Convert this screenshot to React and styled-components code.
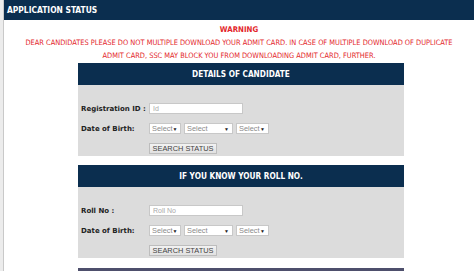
import React from 'react'
import styled, { createGlobalStyle } from 'styled-components'

const GlobalStyle = createGlobalStyle`
  html, body {
    margin: 0;
    padding: 0;
    background: #fff;
    font-family: "DejaVu Sans Condensed", "DejaVu Sans", Verdana, sans-serif;
  }
`

const colors = {
  navy: '#0b2e4f',
  slate: '#4e4f6c',
  panel: '#dcdcdc',
  red: '#e3262a',
  label: '#222',
}

const Page = styled.div`
  display: flex;
  width: 474px;
  height: 271px;
  overflow: hidden;
`

const Rail = styled.div`
  width: 3px;
  flex: none;
  background: #ececec;
  border-right: 1px solid #c9c9c9;
`

const Main = styled.div`
  flex: 1;
  display: flex;
  flex-direction: column;
  & > * {
    flex-shrink: 0;
  }
`

const TopBar = styled.div`
  height: 20px;
  display: flex;
  align-items: center;
  padding-left: 3px;
  background: ${colors.navy};
  color: #fff;
  font-weight: bold;
  font-size: 8.4px;
`

const Warning = styled.div`
  text-align: center;
  color: ${colors.red};
  font-size: 7.4px;
  line-height: 13px;
  padding-top: 3px;
`

const WarningTitle = styled.div`
  font-weight: bold;
  font-size: 7.8px;
`

const Panel = styled.section`
  width: 326px;
  margin: ${(p) => p.$top}px 0 0 74px;
`

const PanelHead = styled.div`
  height: 22px;
  display: flex;
  align-items: center;
  justify-content: center;
  background: ${(p) => p.$bg || colors.navy};
  color: #fff;
  font-weight: bold;
  font-size: 8.2px;
`

const PanelBody = styled.div`
  background: ${colors.panel};
  padding: 18px 3px 2px;
  display: flex;
  flex-direction: column;
  gap: 9px;
`

const Row = styled.div`
  display: flex;
  align-items: center;
  height: 11px;
`

const Label = styled.div`
  width: 68px;
  flex: none;
  font-family: "DejaVu Sans", Verdana, sans-serif;
  font-weight: bold;
  font-size: 7px;
  color: ${colors.label};
`

const TextInput = styled.input`
  box-sizing: border-box;
  width: 94px;
  height: 11px;
  padding: 0 3px;
  border: 1px solid #c8c8c8;
  background: #fff;
  font-family: "Liberation Sans", Arial, sans-serif;
  font-size: 7px;
  outline: none;
  &::placeholder {
    color: #a9a9a9;
  }
`

const Selects = styled.div`
  display: flex;
  gap: 3px;
`

const FakeSelect = styled.div`
  box-sizing: border-box;
  width: ${(p) => p.$w}px;
  height: 11px;
  display: flex;
  align-items: center;
  justify-content: space-between;
  padding: 0 3px 0 2px;
  background: #fff;
  border: 1px solid #c8c8c8;
  font-family: "Liberation Sans", Arial, sans-serif;
  font-size: 7.4px;
  color: #8a8a8a;
`

const Arrow = styled.span`
  font-size: 5px;
  color: #222;
`

const Button = styled.button`
  box-sizing: border-box;
  margin-left: 68px;
  width: 68px;
  height: 11px;
  padding: 0;
  border: 1px solid #bdbdbd;
  background: linear-gradient(#f2f2f2, #e1e1e1);
  font-family: "Liberation Sans", Arial, sans-serif;
  font-size: 7.4px;
  color: #444;
  align-self: flex-start;
`

function DobSelects() {
  return (
    <Selects>
      <FakeSelect $w={32}>Select <Arrow>▼</Arrow></FakeSelect>
      <FakeSelect $w={49}>Select <Arrow>▼</Arrow></FakeSelect>
      <FakeSelect $w={33}>Select <Arrow>▼</Arrow></FakeSelect>
    </Selects>
  )
}

function SearchPanel({ title, label, placeholder, top, bg }) {
  return (
    <Panel $top={top}>
      <PanelHead $bg={bg}>{title}</PanelHead>
      <PanelBody>
        <Row>
          <Label>{label}</Label>
          <TextInput placeholder={placeholder} />
        </Row>
        <Row>
          <Label>Date of Birth:</Label>
          <DobSelects />
        </Row>
        <Row>
          <Button>SEARCH STATUS</Button>
        </Row>
      </PanelBody>
    </Panel>
  )
}

export default function App() {
  return (
    <>
      <GlobalStyle />
      <Page>
        <Rail />
        <Main>
          <TopBar>APPLICATION STATUS</TopBar>
          <Warning>
            <WarningTitle>WARNING</WarningTitle>
            DEAR CANDIDATES PLEASE DO NOT MULTIPLE DOWNLOAD YOUR ADMIT CARD. IN CASE OF MULTIPLE DOWNLOAD OF DUPLICATE
            <br />
            ADMIT CARD, SSC MAY BLOCK YOU FROM DOWNLOADING ADMIT CARD, FURTHER.
          </Warning>
          <SearchPanel
            top={1}
            title="DETAILS OF CANDIDATE"
            label="Registration ID :"
            placeholder="Id"
          />
          <SearchPanel
            top={9}
            title="IF YOU KNOW YOUR ROLL NO."
            label="Roll No :"
            placeholder="Roll No"
          />
          <Panel $top={10}>
            <PanelHead $bg={colors.slate} />
          </Panel>
        </Main>
      </Page>
    </>
  )
}
